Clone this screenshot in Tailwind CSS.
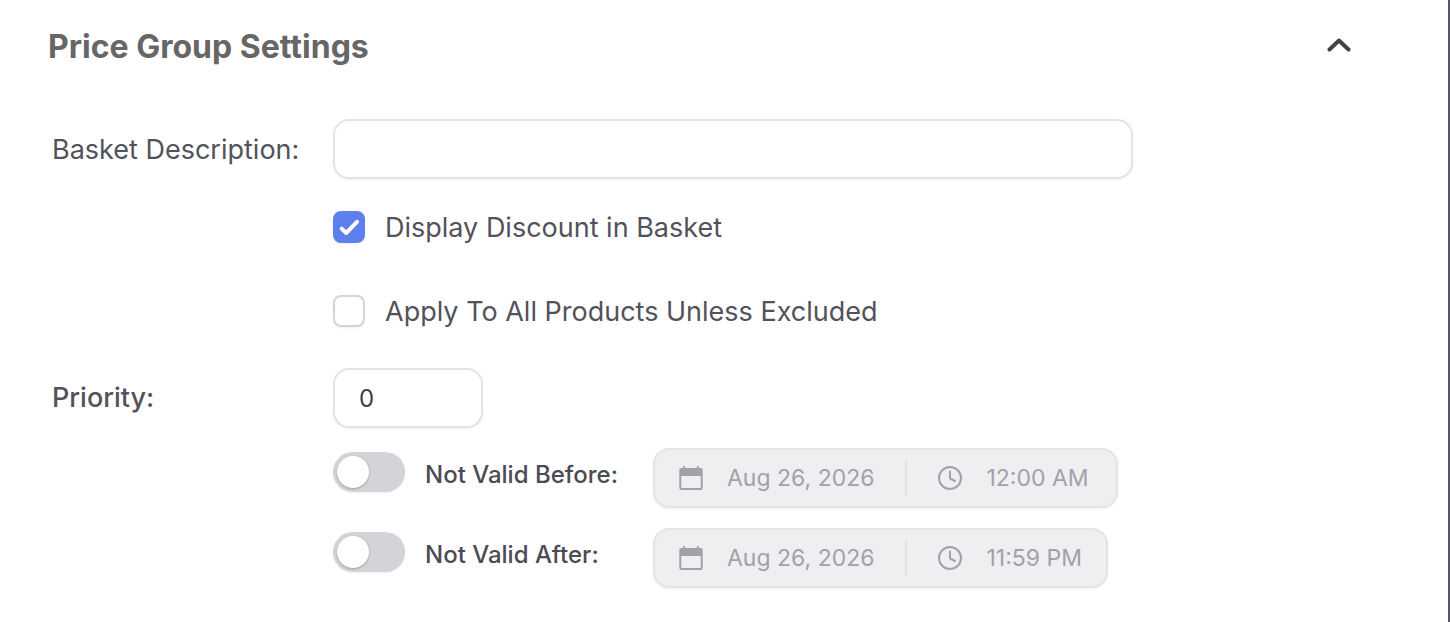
<!DOCTYPE html>
<html lang="en">
<head>
    <meta charset="UTF-8">
    <meta name="viewport" content="width=device-width, initial-scale=1.0">
    <title>Price Group Settings</title>
    <script src="https://cdn.jsdelivr.net/npm/@tailwindcss/browser@4"></script>
</head>
<body class="min-h-screen bg-white border-r-2 border-[#565768] font-[Inter,sans-serif] text-[#52525b]">
    <!-- Header -->
    <header class="flex items-start justify-between pl-12 pr-[93px] pt-[25px]">
        <h1 class="text-[32px] leading-11 font-bold text-[#666666]">Price Group Settings</h1>
        <button type="button" aria-label="Collapse section" aria-expanded="true" class="mt-1 flex size-8 items-center justify-center text-[#444444]">
            <svg class="h-4 w-6" viewBox="0 0 24 16" fill="none" stroke="currentColor" stroke-width="4" stroke-linecap="round" stroke-linejoin="round">
                <path d="M2.500 12.500L12 3.500L21.500 12.500"/>
            </svg>
        </button>
    </header>

    <!-- Settings form -->
    <form class="grid grid-cols-[281px_1fr] pl-[52px] pr-24 pt-[50px] pb-8">
        <label for="description" class="self-center pt-[2px] text-[27px] leading-8">Basket Description:</label>
        <input id="description" type="text" class="h-15 w-full max-w-[800px] rounded-2xl border-2 border-[#e4e4e5] bg-white px-6 text-2xl shadow-sm shadow-black/5">

        <div class="col-start-2 mt-8 flex h-8 items-center gap-5">
            <span class="grid size-8">
                <input id="discount" type="checkbox" checked class="col-start-1 row-start-1 size-8 appearance-none rounded-lg border-2 border-[#d4d4d8] shadow-sm shadow-black/5 checked:border-[#5e7ff0] checked:bg-[#5e7ff0]">
                <svg class="pointer-events-none col-start-1 row-start-1 size-8" viewBox="0 0 32 32" fill="none" stroke="#ffffff" stroke-width="4" stroke-linecap="round" stroke-linejoin="round">
                    <path d="M8.7 17.600L13.2 22L24 10.800"/>
                </svg>
            </span>
            <label for="discount" class="pt-[2px] text-[27px] leading-8">Display Discount in Basket</label>
        </div>

        <div class="col-start-2 mt-13 flex h-8 items-center gap-5">
            <input id="apply-all" type="checkbox" class="size-8 appearance-none rounded-lg border-2 border-[#d4d4d8] shadow-sm shadow-black/5 checked:bg-[#5e7ff0]">
            <label for="apply-all" class="pt-[2px] text-[27px] leading-8">Apply To All Products Unless Excluded</label>
        </div>

        <label for="priority" class="mt-[41px] self-center text-[27px] leading-8 font-medium">Priority:</label>
        <input id="priority" type="text" inputmode="numeric" value="0" class="mt-[41px] h-15 w-[150px] rounded-2xl border-2 border-[#e4e4e5] bg-white px-6 text-2xl text-[#3f3f46] shadow-sm shadow-black/5">

        <!-- Validity dates -->
        <div class="col-start-2 mt-5 grid grid-cols-[320px_1fr] gap-y-5">
            <div class="flex h-12 items-center gap-5">
                <input id="not-before" type="checkbox" role="switch" class="h-10 w-18 shrink-0 appearance-none rounded-full bg-[#d4d4d8] p-1 shadow-sm shadow-black/5 before:block before:size-8 before:rounded-full before:bg-white before:shadow-sm before:shadow-black/20 checked:bg-[#5e7ff0]">
                <label for="not-before" class="pt-[6px] text-2xl font-medium text-[#4b4b54]">Not Valid Before:</label>
            </div>
            <div class="flex h-15 w-fit min-w-[465px] items-center rounded-2xl border-2 border-[#e4e4e5] bg-[#efeff1] px-6 text-[23px] text-[#a1a1aa] shadow-sm shadow-black/5">
                <button type="button" disabled class="flex items-center gap-6">
                    <svg class="size-6" viewBox="0 0 24 24" fill="currentColor">
                        <path fill-rule="evenodd" d="M4.200 .8a1 1 0 0 1 2 0V2h11.600V.8a1 1 0 0 1 2 0V2h1.900a2 2 0 0 1 2 2v18a2 2 0 0 1-2 2H2.300a2 2 0 0 1-2-2V4a2 2 0 0 1 2-2h1.900zM2.300 10v12h19.400V10z"/>
                    </svg>
                    <span>Aug 26, 2026</span>
                </button>
                <span class="mx-[31px] h-9 w-[2px] bg-[#e1e1e4]"></span>
                <button type="button" disabled class="flex items-center gap-6">
                    <svg class="size-6" viewBox="0 0 24 24" fill="none" stroke="currentColor" stroke-width="2" stroke-linecap="round" stroke-linejoin="round">
                        <circle cx="12" cy="12" r="11"/>
                        <path d="M12 5.500V12.500L17 15"/>
                    </svg>
                    <span>12:00 AM</span>
                </button>
            </div>

            <div class="flex h-12 items-center gap-5">
                <input id="not-after" type="checkbox" role="switch" class="h-10 w-18 shrink-0 appearance-none rounded-full bg-[#d4d4d8] p-1 shadow-sm shadow-black/5 before:block before:size-8 before:rounded-full before:bg-white before:shadow-sm before:shadow-black/20 checked:bg-[#5e7ff0]">
                <label for="not-after" class="pt-[6px] text-2xl font-medium text-[#4b4b54]">Not Valid After:</label>
            </div>
            <div class="flex h-15 w-fit items-center rounded-2xl border-2 border-[#e4e4e5] bg-[#efeff1] px-6 text-[23px] text-[#a1a1aa] shadow-sm shadow-black/5">
                <button type="button" disabled class="flex items-center gap-6">
                    <svg class="size-6" viewBox="0 0 24 24" fill="currentColor">
                        <path fill-rule="evenodd" d="M4.200 .8a1 1 0 0 1 2 0V2h11.600V.8a1 1 0 0 1 2 0V2h1.900a2 2 0 0 1 2 2v18a2 2 0 0 1-2 2H2.300a2 2 0 0 1-2-2V4a2 2 0 0 1 2-2h1.900zM2.300 10v12h19.400V10z"/>
                    </svg>
                    <span>Aug 26, 2026</span>
                </button>
                <span class="mx-[31px] h-9 w-[2px] bg-[#e1e1e4]"></span>
                <button type="button" disabled class="flex items-center gap-6">
                    <svg class="size-6" viewBox="0 0 24 24" fill="none" stroke="currentColor" stroke-width="2" stroke-linecap="round" stroke-linejoin="round">
                        <circle cx="12" cy="12" r="11"/>
                        <path d="M12 5.500V12.500L17 15"/>
                    </svg>
                    <span>11:59 PM</span>
                </button>
            </div>
        </div>
    </form>
</body>
</html>
